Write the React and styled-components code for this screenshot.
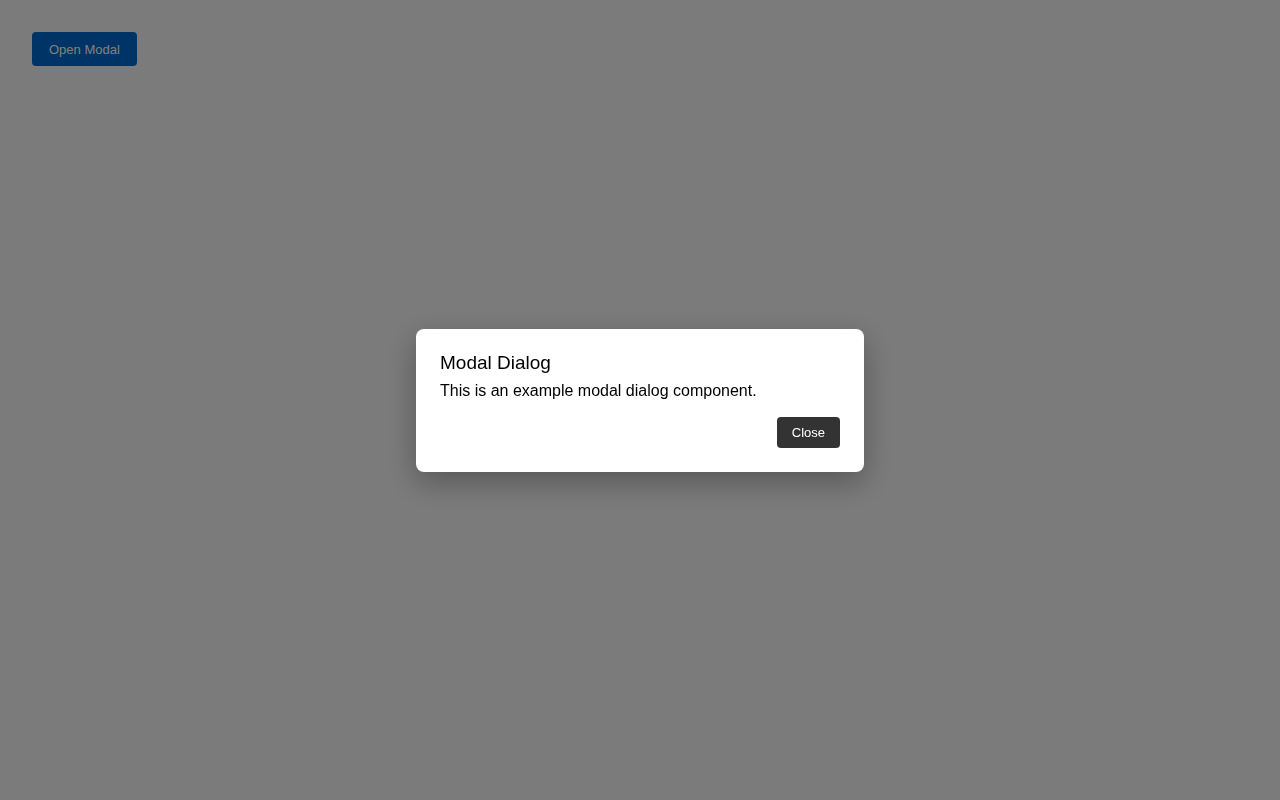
import React, { useState } from "react";
import styled, { createGlobalStyle } from "styled-components";

const GlobalStyle = createGlobalStyle`
  html, body {
    margin: 0;
    padding: 0;
    background: #f7f7f7;
    font-family: "Liberation Sans", Arial, sans-serif;
  }
`;

const App = () => {
  const [open, setOpen] = useState(true);

  return (
    <Page>
      <GlobalStyle />
      <OpenButton onClick={() => setOpen(true)}>Open Modal</OpenButton>
      {open && (
        <Overlay onClick={() => setOpen(false)}>
          <Dialog role="dialog" onClick={(e) => e.stopPropagation()}>
            <Title>Modal Dialog</Title>
            <Body>This is an example modal dialog component.</Body>
            <Footer>
              <CloseButton onClick={() => setOpen(false)}>Close</CloseButton>
            </Footer>
          </Dialog>
        </Overlay>
      )}
    </Page>
  );
};

const Page = styled.div`
  min-height: 100vh;
  padding: 32px;
  box-sizing: border-box;
  background: #f7f7f7;
`;

const OpenButton = styled.button`
  height: 34px;
  padding: 0 17px;
  border: none;
  border-radius: 4px;
  background: #0066cc;
  color: #ffffff;
  font-family: inherit;
  font-size: 13px;
  cursor: pointer;
`;

const Overlay = styled.div`
  position: fixed;
  inset: 0;
  background: rgba(0, 0, 0, 0.5);
  display: flex;
  align-items: center;
  justify-content: center;
`;

const Dialog = styled.div`
  width: 448px;
  box-sizing: border-box;
  padding: 24px;
  background: #fff;
  border-radius: 8px;
  box-shadow: 0 10px 30px rgba(0, 0, 0, 0.3);
  color: #000;
`;

const Title = styled.h2`
  margin: 0 0 8px;
  font-size: 19px;
  font-weight: 400;
  line-height: 20px;
`;

const Body = styled.p`
  margin: 0;
  font-size: 16px;
  line-height: 20px;
`;

const Footer = styled.div`
  display: flex;
  justify-content: flex-end;
  margin-top: 16px;
`;

const CloseButton = styled.button`
  height: 31px;
  padding: 0 15px;
  border: none;
  border-radius: 4px;
  background: #333333;
  color: #fff;
  font-family: inherit;
  font-size: 13px;
  font-weight: 500;
  cursor: pointer;
`;

export default App;
